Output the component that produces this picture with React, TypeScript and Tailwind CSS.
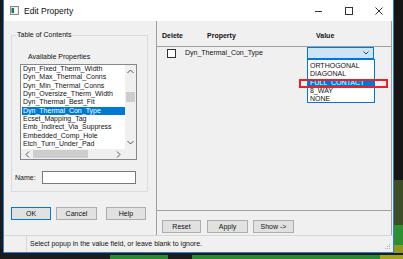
import React from 'react';

const properties = [
  'Dyn_Fixed_Therm_Width',
  'Dyn_Max_Thermal_Conns',
  'Dyn_Min_Thermal_Conns',
  'Dyn_Oversize_Therm_Width',
  'Dyn_Thermal_Best_Fit',
  'Dyn_Thermal_Con_Type',
  'Ecset_Mapping_Tag',
  'Emb_Indirect_Via_Suppress',
  'Embedded_Comp_Hole',
  'Etch_Turn_Under_Pad',
];

const options = ['ORTHOGONAL', 'DIAGONAL', 'FULL_CONTACT', '8_WAY', 'NONE'];

function WinButton({ label, width, focused }: { label: string; width: string; focused?: boolean }) {
  return (
    <div
      className={`${width} h-[13px] flex items-center justify-center bg-[#e1e1e1] border ${
        focused ? 'border-[#0078d7]' : 'border-[#adadad]'
      }`}
    >
      {label}
    </div>
  );
}

function TitleBar() {
  return (
    <div className="h-[21px] bg-white flex items-center shrink-0">
      {/* app icon */}
      <svg width="9" height="9" viewBox="0 0 9 9" className="ml-[6px]">
        <rect x="0.5" y="0.5" width="8" height="8" fill="#e8e8e8" stroke="#8a8a8a" />
        <rect x="1.5" y="2" width="2.5" height="5" fill="#1f7a5a" />
        <rect x="4.5" y="2" width="3" height="5" fill="#ffffff" />
      </svg>
      <span className="ml-[5px] text-[8.5px] text-[#111]">Edit Property</span>

      <div className="ml-auto flex items-center">
        <svg width="8" height="8" viewBox="0 0 8 8" className="mr-[22px]">
          <line x1="0" y1="4.5" x2="7" y2="4.5" stroke="#333" strokeWidth="1" />
        </svg>
        <svg width="8" height="8" viewBox="0 0 8 8" className="mr-[22px]">
          <rect x="0.5" y="0.5" width="7" height="7" fill="none" stroke="#333" strokeWidth="1" />
        </svg>
        <svg width="8" height="8" viewBox="0 0 8 8" className="mr-[10px]">
          <path d="M0.5 0.5 L7.5 7.5 M7.5 0.5 L0.5 7.5" stroke="#333" strokeWidth="1" />
        </svg>
      </div>
    </div>
  );
}

function LeftPanel() {
  return (
    <div className="w-[152px] shrink-0 flex flex-col pl-[7px] pt-[14px]">
      {/* Table of Contents group */}
      <div className="relative w-[137px] h-[157px] border border-[#dcdcdc] flex flex-col">
        <span className="absolute -top-[5px] left-[4px] px-[1px] bg-[#f0f0f0] leading-[8px]">Table of Contents</span>

        <div className="mt-[17px] ml-[16px] h-[8px] leading-[8px]">Available Properties</div>

        <div className="mt-[3px] ml-[8px] w-[117px] h-[96px] border border-[#828790] bg-white flex flex-col">
          <div className="flex h-[84px]">
            <div className="flex-1 overflow-hidden pl-[1px]">
              {properties.map((p) => (
                <div
                  key={p}
                  className={`h-[8.35px] leading-[8.35px] pl-[1px] whitespace-nowrap ${
                    p === 'Dyn_Thermal_Con_Type' ? 'bg-[#0078d7] text-white' : ''
                  }`}
                >
                  {p}
                </div>
              ))}
            </div>
            <div className="w-[11px] bg-[#f0f0f0] flex flex-col items-center">
              <svg width="7" height="5" viewBox="0 0 7 5" className="mt-[4px]">
                <path d="M0.5 4 L3.5 1 L6.5 4" fill="none" stroke="#555" strokeWidth="1" />
              </svg>
              <div className="mt-[18px] w-[9px] h-[10px] bg-[#cdcdcd]" />
              <svg width="7" height="5" viewBox="0 0 7 5" className="mt-auto mb-[4px]">
                <path d="M0.5 1 L3.5 4 L6.5 1" fill="none" stroke="#555" strokeWidth="1" />
              </svg>
            </div>
          </div>
          <div className="flex flex-1 bg-[#f0f0f0]">
            <div className="flex-1 flex items-center">
              <svg width="5" height="7" viewBox="0 0 5 7" className="ml-[4px]">
                <path d="M4 0.5 L1 3.5 L4 6.5" fill="none" stroke="#555" strokeWidth="1" />
              </svg>
              <div className="ml-[3px] w-[55px] h-[8px] bg-[#cdcdcd]" />
              <svg width="5" height="7" viewBox="0 0 5 7" className="ml-auto mr-[4px]">
                <path d="M1 0.5 L4 3.5 L1 6.5" fill="none" stroke="#555" strokeWidth="1" />
              </svg>
            </div>
            <div className="w-[11px] bg-[#f0f0f0]" />
          </div>
        </div>

        <div className="mt-[11px] flex items-center">
          <span className="ml-[3px] w-[27px]">Name:</span>
          <div className="w-[94px] h-[13px] bg-white border border-[#7a7a7a]" />
        </div>
      </div>

      <div className="mt-[15px] flex">
        <WinButton label="OK" width="w-[40px]" focused />
        <div className="ml-[5px]">
          <WinButton label="Cancel" width="w-[41px]" />
        </div>
        <div className="ml-[9px]">
          <WinButton label="Help" width="w-[40px]" />
        </div>
      </div>
    </div>
  );
}

function RightPanel() {
  return (
    <div className="w-[236px] shrink-0 flex flex-col border-l border-r border-[#a0a0a0]">
      <div className="h-[26px] shrink-0 border-b border-[#a0a0a0] flex pt-[11px] pl-[5px] font-bold leading-[8px]">
        <span className="w-[45px]">Delete</span>
        <span className="w-[109px]">Property</span>
        <span>Value</span>
      </div>

      <div className="relative h-[164px] shrink-0 border-b border-[#a0a0a0]">
        <div className="flex items-center h-[12px] pl-[10px]">
          <div className="w-[9px] h-[9px] bg-white border border-[#333]" />
          <span className="ml-[9px] w-[122px]">Dyn_Thermal_Con_Type</span>
          <div className="w-[67px] h-[12px] bg-[#cce4f7] border border-[#0078d7] flex items-center justify-end pr-[4px]">
            <svg width="6" height="4" viewBox="0 0 6 4">
              <path d="M0.5 0.5 L3 3 L5.5 0.5" fill="none" stroke="#444" strokeWidth="1" />
            </svg>
          </div>
        </div>

        {/* open dropdown list */}
        <div className="absolute left-[150px] top-[12px] w-[68px] h-[44px] bg-white border border-[#0078d7] pt-[2px]">
          {options.map((o) => (
            <div
              key={o}
              className={`h-[8.3px] leading-[8.3px] pl-[2px] ${
                o === 'FULL_CONTACT' ? 'bg-[#0078d7] text-white' : ''
              }`}
            >
              {o}
            </div>
          ))}
        </div>

        {/* red highlight box */}
        <div className="absolute left-[142px] top-[32px] w-[89px] h-[9px] border-2 border-[#e8202a]" />
      </div>

      <div className="flex-1 flex pt-[9px] pl-[5px]">
        <WinButton label="Reset" width="w-[39px]" />
        <div className="ml-[6px]">
          <WinButton label="Apply" width="w-[41px]" />
        </div>
        <div className="ml-[5px]">
          <WinButton label="Show ->" width="w-[41px]" />
        </div>
      </div>
    </div>
  );
}

function Window() {
  return (
    <div className="w-[391px] shrink-0 flex flex-col bg-[#f0f0f0] border-l border-r border-b border-[#2b7fd0]">
      <TitleBar />
      <div className="h-[214px] shrink-0 flex">
        <LeftPanel />
        <RightPanel />
      </div>
      <div className="flex-1 flex border-t border-[#d7d7d7]">
        <div className="w-[23px] border-r border-[#d7d7d7]" />
        <span className="ml-[3px] self-center leading-[8px]">
          Select popup in the value field, or leave blank to ignore.
        </span>
        <svg width="6" height="6" viewBox="0 0 6 6" className="ml-auto mt-auto mb-[2px] mr-[2px]">
          <rect x="4" y="0" width="1" height="1" fill="#b0b0b0" />
          <rect x="2" y="2" width="1" height="1" fill="#b0b0b0" />
          <rect x="4" y="2" width="1" height="1" fill="#b0b0b0" />
          <rect x="0" y="4" width="1" height="1" fill="#b0b0b0" />
          <rect x="2" y="4" width="1" height="1" fill="#b0b0b0" />
          <rect x="4" y="4" width="1" height="1" fill="#b0b0b0" />
        </svg>
      </div>
    </div>
  );
}

export default function App() {
  return (
    <div className="w-[403px] h-[259px] flex flex-col overflow-hidden bg-[#141414] text-[7px] leading-[8px] text-[#111] font-['Liberation_Sans',Arial,sans-serif]">
      <div className="h-[253px] shrink-0 flex">
        <div className="w-[3px] shrink-0 bg-[#1a1a1a]" />
        <Window />
        <div className="flex-1 flex flex-col">
          <div className="h-[180px] bg-[#161616]" />
          <div className="h-[45px] bg-[#3d4d28]" />
          <div className="h-[20px] bg-[#2f8f33]" />
          <div className="flex-1 bg-[#8e9a24]" />
        </div>
      </div>
      <div className="flex-1 flex flex-col">
        <div className="h-[2px] bg-[#1c1c1c]" />
        <div className="flex-1 flex">
          <div className="w-[110px] bg-[#1c1c1c]" />
          <div className="w-[58px] bg-[#2b8a31]" />
          <div className="w-[24px] bg-[#1c1c1c]" />
          <div className="w-[188px] bg-[#2b8a31]" />
          <div className="flex-1 bg-[#a3a322]" />
        </div>
      </div>
    </div>
  );
}
